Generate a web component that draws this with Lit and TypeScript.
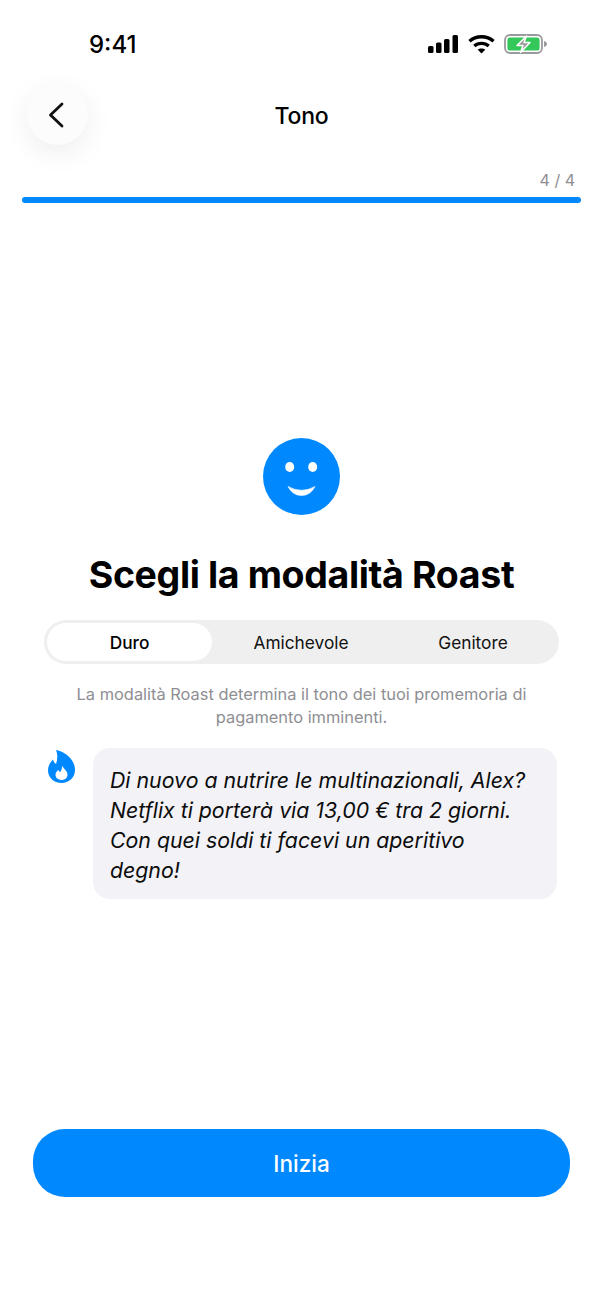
import { LitElement, html, css } from "lit";
import { customElement, state } from "lit/decorators.js";

@customElement("app-root")
export class AppRoot extends LitElement {
  @state() modes = ["Duro", "Amichevole", "Genitore"];
  @state() active = 0;

  static styles = css`
    :host {
      display: block;
      width: 603px;
      height: 1310px;
      background: #fff;
      font-family: Inter, "Liberation Sans", sans-serif;
      color: #000;
      overflow: hidden;
    }
    .status {
      height: 84px;
      display: flex;
      align-items: flex-start;
      justify-content: space-between;
      padding: 29px 55px 0 89px;
      box-sizing: border-box;
    }
    .time {
      margin-top: 1px;
      font-size: 24px;
      line-height: 30px;
      font-weight: 500;
    }
    .status-icons {
      display: flex;
      align-items: center;
      gap: 7px;
      height: 30px;
    }
    .signal {
      margin-right: 2px;
    }
    .battery {
      margin-left: 2px;
    }
    .nav {
      height: 61px;
      margin: 0 27px;
      display: grid;
      grid-template-columns: 61px 1fr 61px;
      align-items: center;
    }
    .back {
      width: 61px;
      height: 61px;
      border-radius: 50%;
      background: #fcfcfc;
      box-shadow: 0 8px 28px rgba(0, 0, 0, 0.07);
      display: flex;
      align-items: center;
      justify-content: center;
    }
    .back svg {
      margin-right: 4px;
    }
    .nav-title {
      margin-top: 2px;
      text-align: center;
      font-size: 23px;
      font-weight: 500;
      line-height: 30px;
      letter-spacing: -0.2px;
    }
    .progress {
      margin: 25px 22px 0;
    }
    .count {
      text-align: right;
      padding-right: 6px;
      font-size: 16px;
      line-height: 20px;
      color: #8e8e93;
    }
    .bar {
      height: 6px;
      margin-top: 7px;
      border-radius: 3px;
      background: #0088ff;
    }
    .content {
      display: flex;
      flex-direction: column;
      align-items: center;
      margin-top: 235px;
    }
    .title {
      margin: 36px 0 0;
      font-size: 37.5px;
      line-height: 48px;
      font-weight: 700;
      letter-spacing: -0.36px;
    }
    .segments {
      width: 515px;
      height: 44px;
      margin-top: 21px;
      box-sizing: border-box;
      padding: 3px;
      border-radius: 22px;
      background: #efefef;
      display: grid;
      grid-template-columns: 165px 178px 166px;
    }
    .segment {
      display: flex;
      align-items: center;
      justify-content: center;
      font-size: 17.3px;
      font-weight: 400;
      border-radius: 19px;
      color: #111;
    }
    .segment.on {
      background: #fff;
      font-weight: 500;
      color: #000;
    }
    .desc {
      width: 480px;
      margin: 19px 0 0;
      text-align: center;
      font-size: 16.4px;
      line-height: 23px;
      color: #8e8e93;
    }
    .message {
      width: 509px;
      margin: 19px 0 0 48px;
      align-self: flex-start;
      display: flex;
      align-items: flex-start;
      justify-content: space-between;
    }
    .flame {
      margin-top: 2px;
    }
    .bubble {
      width: 464px;
      height: 151px;
      box-sizing: border-box;
      padding: 17px 24px 17px 17px;
      border-radius: 17px;
      background: #f2f2f7;
      font-size: 21.3px;
      line-height: 30px;
      font-style: italic;
      color: #0c0c0c;
    }
    .cta {
      width: 537px;
      height: 68px;
      margin: 230px auto 0;
      border-radius: 32px;
      background: #0088ff;
      color: #fff;
      font-size: 22.5px;
      font-weight: 500;
      display: flex;
      align-items: center;
      justify-content: center;
    }
  `;

  renderStatusIcons() {
    return html`
      <div class="status-icons">
        <svg class="signal" width="31" height="20" viewBox="0 0 31 20" fill="#000">
          <rect x="0" y="12" width="5.5" height="7" rx="1.5"></rect>
          <rect x="8" y="8.5" width="5.5" height="10.5" rx="1.5"></rect>
          <rect x="16" y="5" width="5.5" height="14" rx="1.5"></rect>
          <rect x="24.5" y="1" width="5.5" height="18" rx="1.5"></rect>
        </svg>
        <svg width="27" height="20" viewBox="0 0 27 20" fill="none" stroke="#000" stroke-width="3.4">
          <path d="M1.5 7.200C8 1.200 19 1.200 25.500 7.200"></path>
          <path d="M6.300 12C10.200 8.500 16.800 8.500 20.700 12"></path>
          <path d="M13.500 19.500 9.600 15.600C11.700 14 15.300 14 17.400 15.600Z" fill="#000" stroke="none"></path>
        </svg>
        <svg class="battery" width="44" height="20" viewBox="0 0 44 20" fill="none">
          <rect x="1" y="1" width="37" height="18" rx="5" stroke="#9a9a9a" stroke-width="1.8"></rect>
          <rect x="3.400" y="3.400" width="32.200" height="13.200" rx="2.600" fill="#34c759"></rect>
          <path d="M40 7v6c1.800-.5 3-1.600 3-3s-1.200-2.500-3-3Z" fill="#9a9a9a"></path>
          <path d="M22.500 2 13 11.500H19L16.500 18.500 26 8.500H20Z" fill="#9a9a9a" stroke="#fff" stroke-width="1.500" stroke-linejoin="round"></path>
        </svg>
      </div>
    `;
  }

  render() {
    return html`
      <div class="status">
        <div class="time">9:41</div>
        ${this.renderStatusIcons()}
      </div>
      <div class="nav">
        <div class="back">
          <svg width="16" height="26" viewBox="0 0 16 26" fill="none" stroke="#111" stroke-width="2.800" stroke-linecap="round" stroke-linejoin="round">
            <path d="M14 2 2.500 13 14 24"></path>
          </svg>
        </div>
        <div class="nav-title">Tono</div>
        <div></div>
      </div>
      <div class="progress">
        <div class="count">4 / 4</div>
        <div class="bar"></div>
      </div>
      <div class="content">
        <svg width="77" height="77" viewBox="0 0 77 77">
          <circle cx="38.500" cy="38.500" r="38.500" fill="#0088ff"></circle>
          <ellipse cx="26.700" cy="29" rx="4.500" ry="5" fill="#fff"></ellipse>
          <ellipse cx="49.700" cy="29" rx="4.500" ry="5" fill="#fff"></ellipse>
          <path d="M25 48.500Q38.500 56 52 48.500 47.500 57.500 38.500 57.500 29.500 57.500 25 48.500Z" fill="#fff" stroke="#fff" stroke-width="0.600" stroke-linejoin="round"></path>
        </svg>
        <h1 class="title">Scegli la modalità Roast</h1>
        <div class="segments">
          ${this.modes.map(
            (m, i) => html`<div class="segment ${i === this.active ? "on" : ""}">${m}</div>`
          )}
        </div>
        <p class="desc">La modalità Roast determina il tono dei tuoi promemoria di pagamento imminenti.</p>
        <div class="message">
          <svg class="flame" width="27" height="33" viewBox="0 0 27 33">
            <path d="M8 0C14 1 20 4.500 24 10.500 26.500 14 27 17.500 27 20 27 27.500 21 33 13.500 33 6 33 0 27.500 0 20.500 0 15.500 2.500 12 5 9.500 5.500 11.500 6.500 13 8 14 9.500 9.500 10 5 8 0Z" fill="#0088ff"></path>
            <path d="M14 15.500C15 18.500 19.500 20.500 19.500 24.500 19.500 27.800 17 30 13.500 30 10 30 7.500 27.800 7.500 24.800 7.500 22.500 9 21 10.500 20 10.800 21 11.300 21.700 12 22.200 13.300 20.500 14.500 18.500 14 15.500Z" fill="#fff"></path>
          </svg>
          <div class="bubble">Di nuovo a nutrire le multinazionali, Alex? Netflix ti porterà via 13,00 € tra 2 giorni. Con quei soldi ti facevi un aperitivo degno!</div>
        </div>
      </div>
      <div class="cta">Inizia</div>
    `;
  }
}
